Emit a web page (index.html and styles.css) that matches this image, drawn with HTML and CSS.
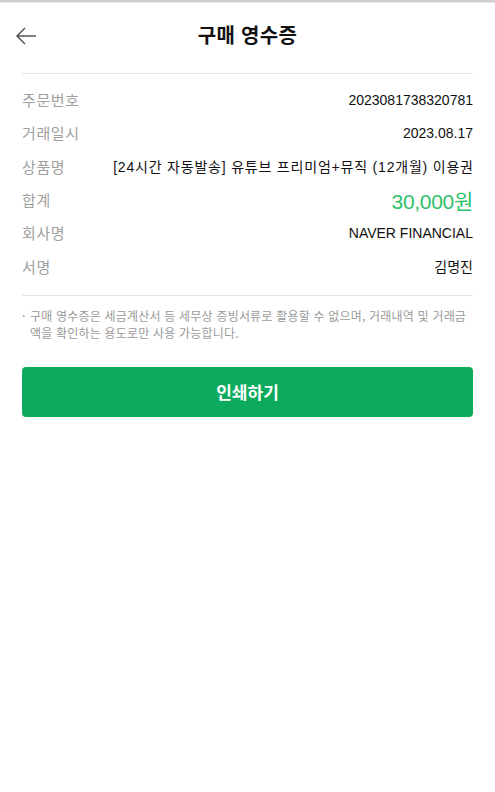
FILE: index.html
```html
<!DOCTYPE html>
<html lang="ko">
<head>
<meta charset="utf-8">
<link rel="stylesheet" href="styles.css">
</head>
<body>
<div class="topline"></div>
<header class="header">
  <button class="back" aria-label="뒤로">
    <svg width="22" height="18" viewBox="0 0 22 18"><path d="M21 9H2M10 1L2 9l8 8" fill="none" stroke="#555" stroke-width="1.5"/></svg>
  </button>
  <h1 class="title">구매 영수증</h1>
</header>
<main class="content">
  <dl class="rows">
    <div class="row"><dt>주문번호</dt><dd>2023081738320781</dd></div>
    <div class="row"><dt>거래일시</dt><dd>2023.08.17</dd></div>
    <div class="row"><dt>상품명</dt><dd class="product">[24시간 자동발송] 유튜브 프리미엄+뮤직 (12개월) 이용권</dd></div>
    <div class="row"><dt>합계</dt><dd class="price">30,000원</dd></div>
    <div class="row"><dt>회사명</dt><dd>NAVER FINANCIAL</dd></div>
    <div class="row"><dt>서명</dt><dd>김명진</dd></div>
  </dl>
  <p class="note"><span class="dot">·</span><span>구매 영수증은 세금계산서 등 세무상 증빙서류로 활용할 수 없으며, 거래내역 및 거래금액을 확인하는 용도로만 사용 가능합니다.</span></p>
  <button class="print">인쇄하기</button>
</main>
</body>
</html>
```
FILE: styles.css
```css
* { box-sizing: border-box; }
html, body { margin: 0; padding: 0; background: #fff; }
body {
  font-family: "Liberation Sans", Arial, "Noto Sans CJK KR", sans-serif;
  color: #111;
}
.topline { height: 3px; background: #cfcfcf; border-bottom: 1px solid #e6e6e6; }
.header {
  position: relative;
  height: 70px;
  display: flex;
  align-items: center;
  justify-content: center;
}
.back {
  position: absolute;
  left: 14px;
  top: 24px;
  border: 0;
  background: none;
  padding: 0;
  width: 24px;
  height: 20px;
}
.title {
  margin: -7px 0 0;
  font-size: 20px;
  font-weight: 700;
  font-family: "Noto Sans CJK KR", sans-serif;
  color: #111;
  letter-spacing: 0.3px;
}
.content { padding: 0 22px; }
.rows {
  margin: 0;
  border-top: 1px solid #e5e5e5;
  border-bottom: 1px solid #e5e5e5;
  padding: 9px 0 12px;
}
.row {
  display: flex;
  justify-content: space-between;
  align-items: center;
  height: 33.3px;
}
.row dt {
  font-family: "Noto Sans CJK KR", sans-serif;
  font-size: 15px;
  color: #a0a0a0;
  letter-spacing: 0.6px;
}
.row dd {
  margin: 0;
  font-size: 14px;
  color: #111;
  text-align: right;
}
.row dd.product { letter-spacing: 0.8px; margin-right: -0.8px; }
.row dd.price {
  font-size: 21px;
  color: #2fbf6a;
  letter-spacing: -0.3px;
}
.note {
  display: flex;
  margin: 11px 0 0;
  font-size: 12px;
  line-height: 17px;
  color: #9a9a9a;
  font-family: "Noto Sans CJK KR", sans-serif;
  letter-spacing: 0.2px;
}
.note .dot { width: 8px; flex: none; }
.print {
  display: block;
  width: 100%;
  height: 50px;
  margin-top: 26px;
  border: 0;
  border-radius: 4px;
  background: #0caa5c;
  color: #fff;
  font-size: 17px;
  font-weight: 700;
  font-family: "Noto Sans CJK KR", sans-serif;
}
```
